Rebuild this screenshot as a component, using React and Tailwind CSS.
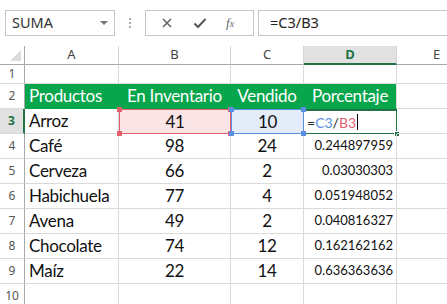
import React from 'react';

const COLS = [
  { key: 'A', w: 'w-[94px]' },
  { key: 'B', w: 'w-[112px]' },
  { key: 'C', w: 'w-[73px]' },
  { key: 'D', w: 'w-[93px]' },
  { key: 'E', w: 'w-[80px]' },
];

const DATA = [
  ['Café', '98', '24', '0.244897959'],
  ['Cerveza', '66', '2', '0.03030303'],
  ['Habichuela', '77', '4', '0.051948052'],
  ['Avena', '49', '2', '0.040816327'],
  ['Chocolate', '74', '12', '0.162162162'],
  ['Maíz', '22', '14', '0.636363636'],
];

const cellFont = "font-['Lato','Open_Sans',sans-serif] text-[17px] tracking-[-0.3px]";
const uiFont = "font-['Noto_Sans','Open_Sans',sans-serif]";

function RowHead({ n, active }) {
  return (
    <div
      className={`w-[25px] shrink-0 flex items-center justify-center border-b border-[#dadada] text-[12px] tracking-normal ${uiFont} ${
        active
          ? 'bg-[#e1e1e1] text-[#217346] font-bold border-r-2 border-r-[#217346]'
          : 'bg-white text-[#555] border-r border-r-[#a9a9a9]'
      }`}
    >
      {n}
    </div>
  );
}

function Cell({ w, className = '', children }) {
  return (
    <div className={`${w} shrink-0 border-r border-b border-[#dadada] flex items-center relative whitespace-nowrap ${className}`}>
      {children}
    </div>
  );
}

function Handles({ color }) {
  return (
    <>
      <span className={`absolute -left-[3px] -top-[3px] w-[5px] h-[5px] ${color}`} />
      <span className={`absolute -right-[3px] -top-[3px] w-[5px] h-[5px] ${color}`} />
      <span className={`absolute -left-[3px] -bottom-[3px] w-[5px] h-[5px] ${color}`} />
      <span className={`absolute -right-[3px] -bottom-[3px] w-[5px] h-[5px] ${color}`} />
    </>
  );
}

export default function App() {
  return (
    <div className="w-[447px] h-[304px] overflow-hidden bg-white">
      {/* Name box + formula bar */}
      <div className="h-[46px] flex items-start pt-[10px] pl-[5px]">
        <div className={`w-[110px] h-[26px] border border-[#c6c6c6] flex items-center pl-[6px] pr-[6px] text-[14.5px] text-[#333] ${uiFont}`}>
          <span className="flex-1">SUMA</span>
          <span className="w-0 h-0 border-l-[4px] border-r-[4px] border-t-[4px] border-l-transparent border-r-transparent border-t-[#777]" />
        </div>
        <div className="w-[30px] h-[26px] flex flex-col items-center justify-center gap-[2px]">
          <span className="w-[2px] h-[2px] bg-[#aaa]" />
          <span className="w-[2px] h-[2px] bg-[#aaa]" />
          <span className="w-[2px] h-[2px] bg-[#aaa]" />
        </div>
        <div className="w-[109px] h-[26px] border border-[#c6c6c6] flex items-center">
          <svg width="12" height="12" viewBox="0 0 12 12" className="ml-[15px]">
            <path d="M2 2 L10 10 M10 2 L2 10" stroke="#666" strokeWidth="1.6" />
          </svg>
          <svg width="14" height="12" viewBox="0 0 14 12" className="ml-[20px]">
            <path d="M1.5 6.5 L5 10 L12.5 2" stroke="#555" strokeWidth="2" fill="none" />
          </svg>
          <span className="ml-[19px] text-[13px] italic text-[#666] font-['Liberation_Serif',serif]">
            f<span className="text-[10px]">x</span>
          </span>
        </div>
        <div className={`ml-[4px] flex-1 h-[26px] border border-r-0 border-[#c6c6c6] flex items-center pl-[11px] text-[14.5px] text-[#222] ${uiFont}`}>
          =C3/B3
        </div>
      </div>

      {/* Column headers */}
      <div className={`h-[19px] flex text-[13px] text-[#444] ${uiFont}`}>
        <div className="w-[25px] shrink-0 border-r border-b border-[#a9a9a9] relative">
          <span className="absolute right-[3px] bottom-[3px] w-0 h-0 border-b-[11px] border-l-[11px] border-b-[#dcdcdc] border-l-transparent" />
        </div>
        {COLS.map((c) => (
          <div
            key={c.key}
            className={`${c.w} shrink-0 flex items-center justify-center border-r border-[#d4d4d4] ${
              c.key === 'D'
                ? 'bg-[#e1e1e1] text-[#217346] font-bold border-b-2 border-b-[#217346]'
                : 'border-b border-b-[#a9a9a9]'
            }`}
          >
            {c.key}
          </div>
        ))}
      </div>

      {/* Row 1 */}
      <div className="h-[19px] flex">
        <RowHead n="1" />
        {COLS.map((c) => (
          <Cell key={c.key} w={c.w} />
        ))}
      </div>

      {/* Row 2 - header */}
      <div className={`h-[25px] flex text-white ${cellFont}`}>
        <RowHead n="2" />
        <Cell w="w-[94px]" className="bg-[#07a54c] border-r-[#07a54c] border-b-[#07a54c] pl-[4px]">Productos</Cell>
        <Cell w="w-[112px]" className="bg-[#07a54c] border-r-[#07a54c] border-b-[#07a54c] justify-center">En Inventario</Cell>
        <Cell w="w-[73px]" className="bg-[#07a54c] border-r-[#07a54c] border-b-[#07a54c] justify-center">Vendido</Cell>
        <Cell w="w-[93px]" className="bg-[#07a54c] border-b-[#07a54c] justify-center">Porcentaje</Cell>
        <Cell w="w-[80px]" />
      </div>

      {/* Row 3 - editing */}
      <div className={`h-[25px] flex text-[#111] ${cellFont}`}>
        <RowHead n="3" active />
        <Cell w="w-[94px]" className="pl-[4px]">Arroz</Cell>
        <Cell w="w-[112px]" className="justify-center bg-[#fbe4e5] !border-[#e0606c] border-[1.5px] z-10">
          41
          <Handles color="bg-[#e0606c]" />
        </Cell>
        <Cell w="w-[73px]" className="justify-center bg-[#e4ecf9] !border-[#5a8ee0] border-[1.5px] z-10">
          10
          <Handles color="bg-[#5a8ee0]" />
        </Cell>
        <Cell w="w-[93px]" className="!border-[#217346] border-2 border-l-0 pl-[3px] !text-[14px] !tracking-normal">
          <span className="text-[#222]">=</span>
          <span className="text-[#5a8ee0]">C3</span>
          <span className="text-[#222]">/</span>
          <span className="text-[#e0606c]">B3</span>
          <span className="ml-[1px] w-[1px] h-[16px] bg-black" />
          <span className="absolute -right-[4px] -bottom-[4px] w-[6px] h-[6px] bg-[#217346] border border-white" />
        </Cell>
        <Cell w="w-[80px]" />
      </div>

      {/* Rows 4-9 */}
      {DATA.map((r, i) => (
        <div key={r[0]} className={`h-[25px] flex text-[#111] ${cellFont}`}>
          <RowHead n={String(i + 4)} />
          <Cell w="w-[94px]" className="pl-[4px]">{r[0]}</Cell>
          <Cell w="w-[112px]" className="justify-center">{r[1]}</Cell>
          <Cell w="w-[73px]" className="justify-center">{r[2]}</Cell>
          <Cell w="w-[93px]" className="justify-end pr-[3px] !text-[13px] !tracking-normal">{r[3]}</Cell>
          <Cell w="w-[80px]" />
        </div>
      ))}

      {/* Row 10 */}
      <div className="h-[25px] flex">
        <RowHead n="10" />
        {COLS.map((c) => (
          <Cell key={c.key} w={c.w} />
        ))}
      </div>
    </div>
  );
}
